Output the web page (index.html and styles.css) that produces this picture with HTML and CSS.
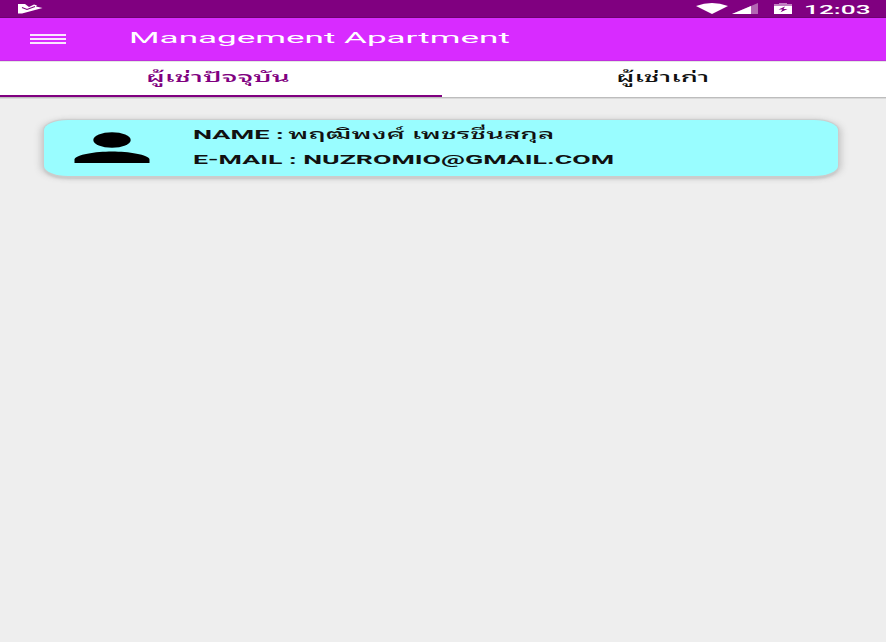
FILE: index.html
```
<!DOCTYPE html>
<html lang="th">
<head>
<meta charset="utf-8">
<title>Management Apartment</title>
<link rel="stylesheet" href="styles.css">
</head>
<body>
<header class="status">
<svg class="play" viewBox="0 0 26 11"><path d="M1 1 L8 1 12 4 17 1.500 20 2.5 19 3.5 25.500 5 5 10.500 1 10.500z" fill="#fff"/><path d="M5 4.5 L10 6.500 18 3.6" fill="none" stroke="#800080" stroke-width="1.1"/></svg>
<svg class="wifi" viewBox="0 0 32 11"><path d="M0 3 Q16 -3 32 3 L16 11z" fill="#fff"/></svg>
<svg class="signal" viewBox="0 0 26 11"><path d="M0 11 L26 0 V11z" fill="#b366b3"/><path d="M0 11 L19 3 V11z" fill="#fff"/></svg>
<svg class="battery" viewBox="0 0 18 11"><path d="M0 1.2 H5 V0 H13 V1.2 H18 V11 H0z" fill="#fff"/><path d="M0 1 H5 V0 H13 V1 H18 V3 H0z" fill="#c17fc1"/><path d="M11 3.5 L4.5 6.5 H8.500 L6.5 9.2 13.5 6 H9.500z" fill="#800080"/></svg>
<span class="clock"><span class="wide">12:03</span></span>
</header>
<div class="appbar">
<svg class="menu" viewBox="0 0 36 11"><path d="M0 1 H36 M0 5 H36 M0 9 H36" stroke="#fbe6ff" stroke-width="1.8"/></svg>
<h1 class="title"><span class="wide">Management Apartment</span></h1>
</div>
<nav class="tabs">
<div class="tab active"><span class="wide">ผู้เช่าปัจจุบัน</span></div>
<div class="tab"><span class="wide">ผู้เช่าเก่า</span></div>
</nav>
<main>
<article class="card">
<svg class="person" viewBox="0 0 76 32"><ellipse cx="38" cy="8" rx="18.7" ry="7.8"/><path d="M0.5 31 V27.5 C1 22.5 22 19.5 38 19.5 S75 22.5 75.500 27.500 V31z"/></svg>
<div class="details">
<p class="name"><span class="wide">NAME : <span class="thai">พฤฒิพงศ์ เพชรชื่นสกุล</span></span></p>
<p class="mail"><span class="wide">E-MAIL : NUZROMIO@GMAIL.COM</span></p>
</div>
</article>
</main>
</body>
</html>
```
FILE: styles.css
```
* { box-sizing: border-box; }
body { margin: 0; height: 642px; overflow: hidden; background: #eee; color: #111; font-family: Roboto, "Noto Sans Thai Looped", "Noto Looped Thai", Loma, Waree, "Noto Sans Thai", "Noto Sans", sans-serif; }
svg { display: block; flex: none; }
.wide { display: inline-block; white-space: nowrap; transform: scaleX(2.45); transform-origin: left center; }
.status { height: 18px; background: #800080; color: #fff; display: flex; align-items: flex-start; padding: 3px 0 0 17px; border-bottom: 1px solid #70006f; }
.play { width: 26px; height: 11px; }
.wifi { width: 32px; height: 11px; margin-left: 653px; }
.signal { width: 26px; height: 11px; margin-left: 4px; }
.battery { width: 18px; height: 11px; margin-left: 16px; }
.clock { width: 70px; margin-left: 12px; font-size: 12.5px; font-weight: 500; line-height: 13px; }
.clock .wide { transform: scaleX(2.1); }
.appbar { height: 43px; display: flex; align-items: center; padding-left: 30px; background: #d82bff; color: #fff; border-bottom: 1px solid #c030dd; }
.menu { width: 36px; height: 11px; }
.title { margin: -3px 0 0 63px; font-size: 15px; font-weight: 400; line-height: 20px; }
.title .wide { transform: scaleX(2.335); }
.tabs { height: 37px; display: flex; background: #fff; border-top: 1px solid #e3e8e3; border-bottom: 1px solid #bdbdbd; box-shadow: 0 1px 0 #dadada; }
.tab { height: 35px; flex: 1; display: flex; justify-content: center; padding-top: 5px; padding-right: 2px; font-size: 13.5px; font-weight: 500; line-height: 20px; }
.tab .wide { transform: scaleX(2.04); transform-origin: center; }
.tab.active { flex: 0 0 442px; padding-right: 6px; color: #800080; border-bottom: 2px solid #800080; }
.tab.active .wide { transform: scaleX(2.12); }
main { padding: 22px 48px 0 44px; }
.card { height: 56px; display: flex; align-items: flex-start; background: #99fdff; border-radius: 24px / 10px; box-shadow: 0 0 1px 1px #ccc, -4px 1px 6px #ccc, 4px 1px 6px #ccc, 0 3px 2px #c8c8c8; padding: 12px 0 0 30px; }
.person { width: 76px; height: 32px; }
.details { margin-left: 43px; margin-top: -8px; }
p { margin: 0; height: 26px; line-height: 20px; font-size: 13px; font-weight: 700; }
.thai { font-size: 13.5px; font-weight: 500; margin-left: -1px; }
.name .wide { transform: scaleX(2.08); }
.mail .wide { transform: scaleX(2.055); }
```
